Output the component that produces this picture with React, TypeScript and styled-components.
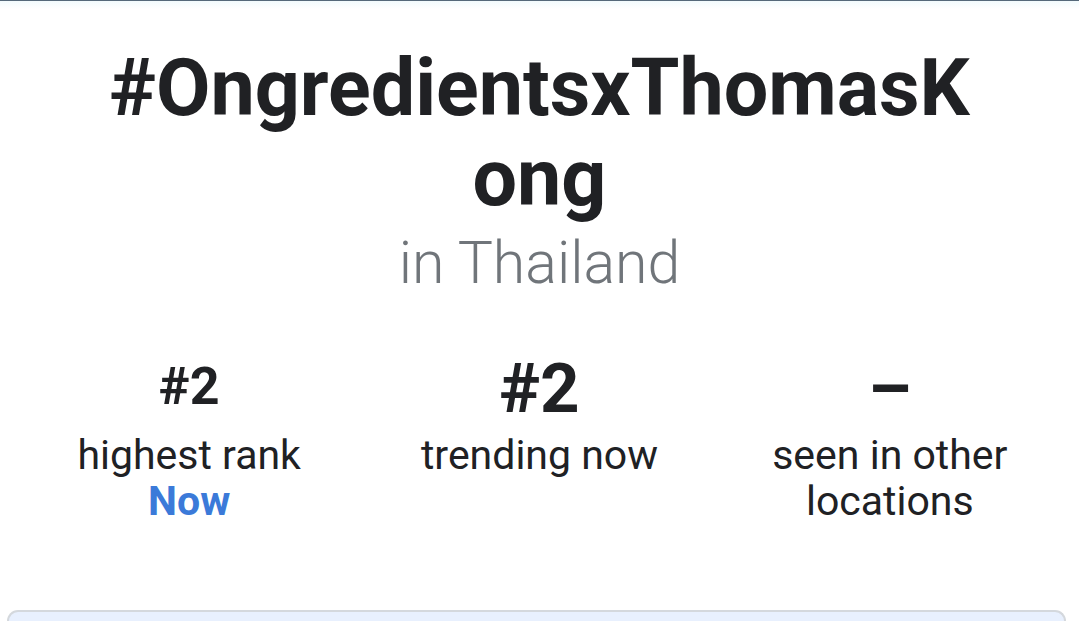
import React from "react";
import styled, { createGlobalStyle } from "styled-components";

const Global = createGlobalStyle`
  html, body { margin: 0; padding: 0; background: #ffffff; }
  body { font-family: Roboto, "Noto Sans", Arial, sans-serif; color: #202124; }
  * { box-sizing: border-box; }
`;

const Page = styled.div`
  width: 1079px;
  height: 621px;
  overflow: hidden;
  border-top: 1px solid #56697a;
  background: linear-gradient(#f2fbfd 0px, #ffffff 8px);
  display: flex;
  flex-direction: column;
  align-items: center;
`;

const Title = styled.h1`
  margin: 42px 0 0;
  width: 880px;
  text-align: center;
  font-size: 79px;
  line-height: 90px;
  font-weight: 700;
  color: #202124;
  word-break: break-all;
`;

const Subtitle = styled.div`
  margin-top: 8px;
  font-size: 59px;
  line-height: 64px;
  font-weight: 300;
  color: #70757a;
`;

const Stats = styled.div`
  margin-top: 57px;
  width: 100%;
  padding: 0 14px;
  display: grid;
  grid-template-columns: repeat(3, 1fr);
`;

const Stat = styled.div`
  display: flex;
  flex-direction: column;
  align-items: center;
  text-align: center;
`;

const Value = styled.div<{ $big?: boolean }>`
  height: 80px;
  display: flex;
  align-items: flex-end;
  font-size: ${(p) => (p.$big ? "69px" : "52px")};
  line-height: 1;
  font-weight: 700;
  color: #202124;
  padding-bottom: ${(p) => (p.$big ? "9px" : "19px")};
`;

const Label = styled.div`
  font-size: 41px;
  line-height: 46px;
  font-weight: 400;
  color: #202124;
`;

const Accent = styled.div`
  font-size: 41px;
  line-height: 46px;
  font-weight: 700;
  color: #3b7ad9;
`;

const Card = styled.div`
  margin-top: auto;
  align-self: flex-start;
  margin-left: 7px;
  width: 1059px;
  height: 11px;
  background: #e8f0fe;
  border: 2px solid #d4d8dd;
  border-bottom: none;
  border-radius: 12px 12px 0 0;
`;

export default function App() {
  return (
    <>
      <Global />
      <Page>
        <Title>#OngredientsxThomasKong</Title>
        <Subtitle>in Thailand</Subtitle>
        <Stats>
          <Stat>
            <Value>#2</Value>
            <Label>highest rank</Label>
            <Accent>Now</Accent>
          </Stat>
          <Stat>
            <Value $big>#2</Value>
            <Label>trending now</Label>
          </Stat>
          <Stat>
            <Value $big>–</Value>
            <Label>
              seen in other
              <br />
              locations
            </Label>
          </Stat>
        </Stats>
        <Card />
      </Page>
    </>
  );
}
